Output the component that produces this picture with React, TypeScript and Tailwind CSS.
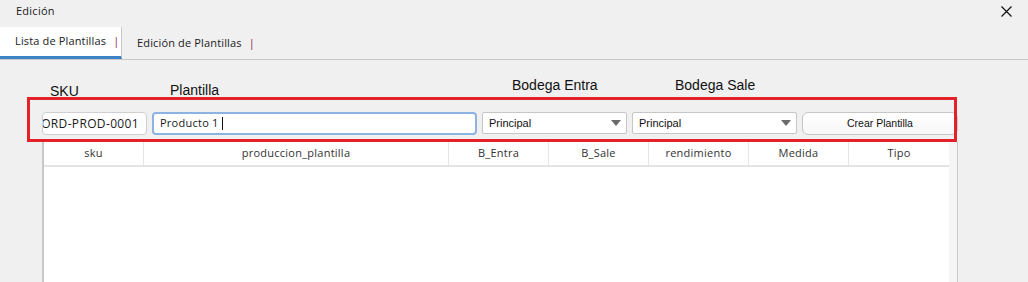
import React from 'react'

const mont = { fontFamily: '"Open Sans", "DejaVu Sans", sans-serif', letterSpacing: '0.25px' }
const tabFont = { fontFamily: '"Open Sans", "DejaVu Sans", sans-serif', letterSpacing: '0.15px' }

// columnas de la grilla
const columns = [
  { key: 'sku', w: 'w-[100px]' },
  { key: 'produccion_plantilla', w: 'w-[305px]' },
  { key: 'B_Entra', w: 'w-[100px]' },
  { key: 'B_Sale', w: 'w-[100px]' },
  { key: 'rendimiento', w: 'w-[100px]' },
  { key: 'Medida', w: 'w-[100px]' },
  { key: 'Tipo', w: 'w-[100px]' },
]

function Caret() {
  return (
    <svg width="10" height="6" viewBox="0 0 10 6" className="shrink-0">
      <path d="M0 0 L10 0 L5 6 Z" fill="#6b6b6b" />
    </svg>
  )
}

function Select({ width }: { width: string }) {
  return (
    <div className={`${width} h-[22px] flex items-center justify-between pl-[6px] pr-[5px] bg-white border border-[#c6c6c6] rounded-[2px]`}>
      <span className="text-[11px] text-[#111] font-['Liberation_Sans',Arial,sans-serif]">Principal</span>
      <Caret />
    </div>
  )
}

export default function App() {
  return (
    <div className="relative w-[1028px] h-[282px] overflow-hidden bg-[#f0f0f0] text-[#1a1a1a]">
      {/* barra de título */}
      <div className="h-[27px] flex items-start justify-between">
        <span className="mt-[3px] ml-[16px] text-[11px] leading-[16px]" style={mont}>Edición</span>
        <svg width="11" height="11" viewBox="0 0 11 11" className="mt-[6px] mr-[16px]">
          <path d="M0.5 0.5 L10.5 10.5 M10.5 0.5 L0.5 10.5" stroke="#111" strokeWidth="1.2" />
        </svg>
      </div>

      {/* pestañas */}
      <div className="h-[33px] flex items-stretch border-b border-[#c9c9c9]">
        <div className="w-[122px] shrink-0 whitespace-nowrap bg-white border-r border-[#c9c9c9] border-b-[3px] border-b-[#3d84c6] flex items-center pl-[15px] text-[11px]" style={tabFont}>
          Lista de Plantillas
          <span className="ml-[7px] text-[#8a1c4b]">|</span>
        </div>
        <div className="whitespace-nowrap flex items-center pl-[15px] text-[11px]" style={tabFont}>
          Edición de Plantillas
          <span className="ml-[7px] text-[#8a1c4b]">|</span>
        </div>
      </div>

      {/* etiquetas */}
      <div className="h-[52px] flex items-start font-['Liberation_Sans',Arial,sans-serif] text-[14px] text-[#111]">
        <span className="ml-[50px] w-[120px] mt-[23px] leading-[16px]">SKU</span>
        <span className="w-[342px] mt-[22px] leading-[16px]">Plantilla</span>
        <span className="w-[163px] mt-[17px] leading-[16px]">Bodega Entra</span>
        <span className="mt-[17px] leading-[16px]">Bodega Sale</span>
      </div>

      {/* controles */}
      <div className="flex items-start gap-[5px] pl-[42px]">
        <div className="w-[105px] h-[23px] bg-white border border-[#cfcfcf] rounded-[4px] overflow-hidden flex items-center justify-end pr-[7px]">
          <span className="whitespace-nowrap text-[12px]" style={{ ...mont, letterSpacing: '0.35px' }}>ORD-PROD-0001</span>
        </div>
        <div className="w-[325px] h-[23px] bg-white border-2 border-[#8db3e2] rounded-[4px] flex items-center pl-[6px]">
          <span className="text-[11px]" style={mont}>Producto 1</span>
          <span className="ml-[3px] w-px h-[13px] bg-[#111]" />
        </div>
        <Select width="w-[145px]" />
        <Select width="w-[165px]" />
        <button className="w-[156px] h-[23px] bg-gradient-to-b from-white to-[#f7f7f7] border border-[#c6c6c6] rounded-[6px] text-[10.5px] text-[#111] font-['Liberation_Sans',Arial,sans-serif]">
          Crear Plantilla
        </button>
      </div>

      {/* grilla */}
      <div className="mt-[7px] ml-[42px] w-[916px] h-[140px] flex border-l-2 border-r border-[#c8c8c8]">
        <div className="w-[905px] bg-white flex flex-col">
          <div className="h-[25px] flex border-b-2 border-[#e4e4e4]">
            {columns.map((c, i) => (
              <div
                key={c.key}
                className={`${c.w} flex items-center justify-center text-[11px] text-[#333] ${i < columns.length - 1 ? 'border-r border-[#e4e4e4]' : ''}`}
                style={mont}
              >
                {c.key}
              </div>
            ))}
          </div>
        </div>
        <div className="flex-1 bg-[#f5f5f5]" />
      </div>

      {/* recuadro rojo de anotación */}
      <div className="absolute left-[27px] top-[97px] w-[930px] h-[45px] border-[3px] border-[#e3212a] pointer-events-none" />
    </div>
  )
}
